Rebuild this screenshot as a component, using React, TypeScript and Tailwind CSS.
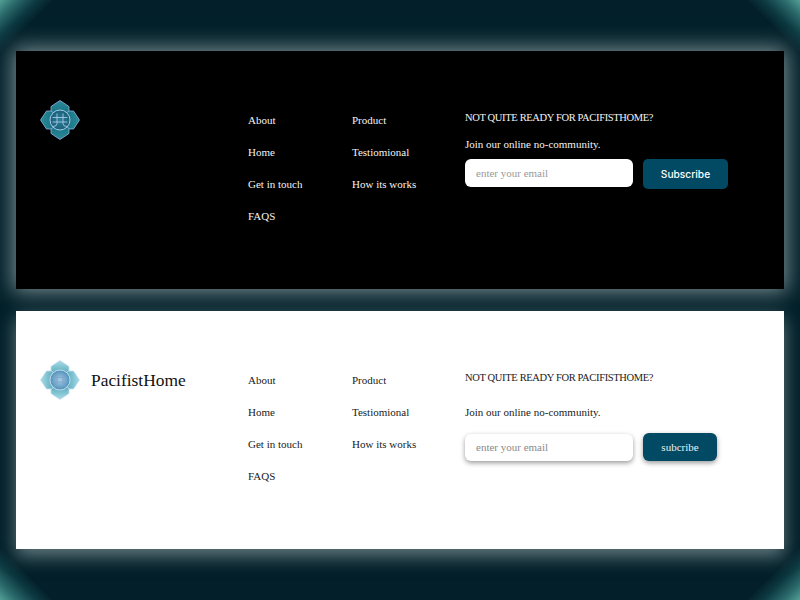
import React from "react";

const serif = "font-['Liberation_Serif',serif]";

function Logo({ light }: { light?: boolean }) {
  const id = light ? "l" : "d";
  const petals = [0, 90, 180, 270];
  return (
    <svg width="40" height="40" viewBox="0 0 40 40" className="block shrink-0">
      <defs>
        <linearGradient id={`p${id}`} x1="0" y1="0" x2="0" y2="1">
          <stop offset="0" stopColor={light ? "#a9dbe6" : "#2c8a98"} />
          <stop offset="0.5" stopColor={light ? "#6db8c6" : "#1c7a88"} />
          <stop offset="1" stopColor={light ? "#4f9fb2" : "#14606f"} />
        </linearGradient>
        <radialGradient id={`c${id}`} cx="0.5" cy="0.5" r="0.5">
          <stop offset="0" stopColor={light ? "#a8cde6" : "#2a7f96"} />
          <stop offset="1" stopColor={light ? "#4f8fb8" : "#1c5f78"} />
        </radialGradient>
      </defs>
      {petals.map((r) => (
        <path
          key={r}
          transform={`rotate(${r} 20 20)`}
          d="M20 0.5 L29 6.5 L29 11.5 L20 20 L11 11.5 L11 6.5 Z"
          fill={`url(#p${id})`}
          stroke={light ? "#c4dcf4" : "#8fb6e6"}
          strokeWidth="0.8"
          strokeLinejoin="miter"
        />
      ))}
      <circle cx="20" cy="20" r="10" fill={`url(#c${id})`} stroke={light ? "#c0d8f0" : "#a5c6ee"} strokeWidth="1" />
      <g fill="none" stroke={light ? "#7fa4cc" : "#b5d2ee"} strokeWidth="0.8">
        <path d="M17 13.5v10M23 13.5v10M12.5 17.5h15M12.5 22h15" />
        <path d="M17 23.5q0 3-4 3M23 23.5q0 3 4 3" />
      </g>
    </svg>
  );
}

function LinkCol({ items, w }: { items: string[]; w: string }) {
  return (
    <ul className={`${w} flex flex-col gap-[16px] text-[11px] leading-[16px]`}>
      {items.map((t) => (
        <li key={t}>{t}</li>
      ))}
    </ul>
  );
}

const col1 = ["About", "Home", "Get in touch", "FAQS"];
const col2 = ["Product", "Testiomional", "How its works"];

export default function App() {
  return (
    <div className="h-[600px] w-[800px] overflow-hidden flex flex-col px-4 pt-[51px] gap-[22px] bg-[#03202a] bg-[linear-gradient(135deg,#52a096_0px,#2b6a6c_12px,#0d3a42_26px,#03202a_38px,transparent_38px),linear-gradient(225deg,#52a096_0px,#2b6a6c_12px,#0d3a42_26px,#03202a_38px,transparent_38px),linear-gradient(45deg,#52a096_0px,#2b6a6c_12px,#0d3a42_26px,#03202a_38px,transparent_38px),linear-gradient(315deg,#52a096_0px,#2b6a6c_12px,#0d3a42_26px,#03202a_38px,transparent_38px)]">
      {/* Dark footer */}
      <section className={`h-[238px] shrink-0 bg-black text-[#f4f4f4] flex pl-6 pt-[49px] shadow-[0_0_20px_3px_rgba(200,215,215,0.6)] ${serif}`}>
        <div className="w-[208px] shrink-0">
          <Logo />
        </div>
        <div className="flex pt-[12px] items-start">
          <LinkCol items={col1} w="w-[104px]" />
          <LinkCol items={col2} w="w-[113px]" />
        </div>
        <div className="flex flex-col">
          <p className="text-[10.5px] tracking-[-0.35px] leading-[16px] mt-[10px]">NOT QUITE READY FOR PACIFISTHOME?</p>
          <p className="text-[11px] leading-[16px] mt-[10px]">Join our online no-community.</p>
          <div className="flex items-start gap-[10px] mt-[7px]">
            <div className="w-[168px] h-[28px] rounded-[6px] bg-white pl-[11px] flex items-center text-[11px] text-[#9a9a9a]">
              enter your email
            </div>
            <button className="w-[85px] h-[30px] pt-[1px] rounded-[5px] bg-[#024a63] text-white text-[10.2px] font-medium font-['Inter',sans-serif]">
              Subscribe
            </button>
          </div>
        </div>
      </section>

      {/* Light footer */}
      <section className={`h-[238px] shrink-0 bg-white text-[#1a1a1a] flex pl-6 pt-[49px] shadow-[0_7px_17px_0_rgba(200,215,215,0.5)] ${serif}`}>
        <div className="w-[208px] shrink-0 flex items-center self-start gap-[11px]">
          <Logo light />
          <span className="text-[17.4px] leading-[40px] text-[#111]">PacifistHome</span>
        </div>
        <div className="flex pt-[12px] items-start">
          <LinkCol items={col1} w="w-[104px]" />
          <LinkCol items={col2} w="w-[113px]" />
        </div>
        <div className="flex flex-col">
          <p className="text-[10.5px] tracking-[-0.35px] leading-[16px] mt-[10px]">NOT QUITE READY FOR PACIFISTHOME?</p>
          <p className="text-[11px] leading-[16px] mt-[18px]">Join our online no-community.</p>
          <div className="flex items-start gap-[10px] mt-[13px]">
            <div className="w-[168px] h-[27px] mt-[1px] rounded-[6px] bg-white shadow-[0_2px_5px_rgba(0,0,0,0.4)] pl-[11px] flex items-center text-[11px] text-[#8a8a8a]">
              enter your email
            </div>
            <button className={`w-[74px] h-[28px] rounded-[6px] bg-[#024a63] text-[#e8f0f2] text-[11px] shadow-[0_2px_5px_rgba(0,0,0,0.4)] ${serif}`}>
              subcribe
            </button>
          </div>
        </div>
      </section>
    </div>
  );
}
